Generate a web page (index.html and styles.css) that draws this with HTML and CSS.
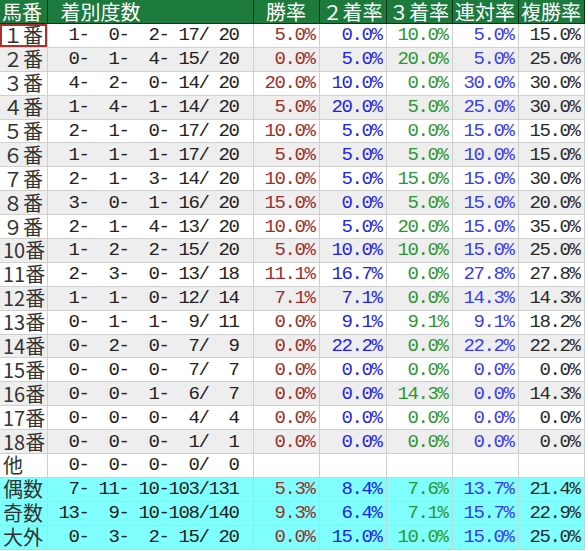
FILE: index.html
```html
<!DOCTYPE html>
<html lang="ja">
<head>
<meta charset="utf-8">
<link rel="stylesheet" href="styles.css">
</head>
<body>
<table class="stats">
<colgroup>
<col class="c-no"><col class="c-cnt"><col class="c-r"><col class="c-r2"><col class="c-r"><col class="c-r"><col class="c-r">
</colgroup>
<thead>
<tr><th class="h-no">馬番</th><th class="h-cnt">着別度数</th><th class="h-r">勝率</th><th class="h-r">２着率</th><th class="h-r">３着率</th><th class="h-r">連対率</th><th class="h-r">複勝率</th></tr>
</thead>
<tbody>
<tr><td class="no sel">１番</td><td class="cnt">  1-  0-  2- 17/ 20</td><td class="win">5.0%</td><td class="p2">0.0%</td><td class="p3">10.0%</td><td class="ren">5.0%</td><td class="fuku">15.0%</td></tr>
<tr><td class="no">２番</td><td class="cnt">  0-  1-  4- 15/ 20</td><td class="win">0.0%</td><td class="p2">5.0%</td><td class="p3">20.0%</td><td class="ren">5.0%</td><td class="fuku">25.0%</td></tr>
<tr><td class="no">３番</td><td class="cnt">  4-  2-  0- 14/ 20</td><td class="win">20.0%</td><td class="p2">10.0%</td><td class="p3">0.0%</td><td class="ren">30.0%</td><td class="fuku">30.0%</td></tr>
<tr><td class="no">４番</td><td class="cnt">  1-  4-  1- 14/ 20</td><td class="win">5.0%</td><td class="p2">20.0%</td><td class="p3">5.0%</td><td class="ren">25.0%</td><td class="fuku">30.0%</td></tr>
<tr><td class="no">５番</td><td class="cnt">  2-  1-  0- 17/ 20</td><td class="win">10.0%</td><td class="p2">5.0%</td><td class="p3">0.0%</td><td class="ren">15.0%</td><td class="fuku">15.0%</td></tr>
<tr><td class="no">６番</td><td class="cnt">  1-  1-  1- 17/ 20</td><td class="win">5.0%</td><td class="p2">5.0%</td><td class="p3">5.0%</td><td class="ren">10.0%</td><td class="fuku">15.0%</td></tr>
<tr><td class="no">７番</td><td class="cnt">  2-  1-  3- 14/ 20</td><td class="win">10.0%</td><td class="p2">5.0%</td><td class="p3">15.0%</td><td class="ren">15.0%</td><td class="fuku">30.0%</td></tr>
<tr><td class="no">８番</td><td class="cnt">  3-  0-  1- 16/ 20</td><td class="win">15.0%</td><td class="p2">0.0%</td><td class="p3">5.0%</td><td class="ren">15.0%</td><td class="fuku">20.0%</td></tr>
<tr><td class="no">９番</td><td class="cnt">  2-  1-  4- 13/ 20</td><td class="win">10.0%</td><td class="p2">5.0%</td><td class="p3">20.0%</td><td class="ren">15.0%</td><td class="fuku">35.0%</td></tr>
<tr><td class="no">10番</td><td class="cnt">  1-  2-  2- 15/ 20</td><td class="win">5.0%</td><td class="p2">10.0%</td><td class="p3">10.0%</td><td class="ren">15.0%</td><td class="fuku">25.0%</td></tr>
<tr><td class="no">11番</td><td class="cnt">  2-  3-  0- 13/ 18</td><td class="win">11.1%</td><td class="p2">16.7%</td><td class="p3">0.0%</td><td class="ren">27.8%</td><td class="fuku">27.8%</td></tr>
<tr><td class="no">12番</td><td class="cnt">  1-  1-  0- 12/ 14</td><td class="win">7.1%</td><td class="p2">7.1%</td><td class="p3">0.0%</td><td class="ren">14.3%</td><td class="fuku">14.3%</td></tr>
<tr><td class="no">13番</td><td class="cnt">  0-  1-  1-  9/ 11</td><td class="win">0.0%</td><td class="p2">9.1%</td><td class="p3">9.1%</td><td class="ren">9.1%</td><td class="fuku">18.2%</td></tr>
<tr><td class="no">14番</td><td class="cnt">  0-  2-  0-  7/  9</td><td class="win">0.0%</td><td class="p2">22.2%</td><td class="p3">0.0%</td><td class="ren">22.2%</td><td class="fuku">22.2%</td></tr>
<tr><td class="no">15番</td><td class="cnt">  0-  0-  0-  7/  7</td><td class="win">0.0%</td><td class="p2">0.0%</td><td class="p3">0.0%</td><td class="ren">0.0%</td><td class="fuku">0.0%</td></tr>
<tr><td class="no">16番</td><td class="cnt">  0-  0-  1-  6/  7</td><td class="win">0.0%</td><td class="p2">0.0%</td><td class="p3">14.3%</td><td class="ren">0.0%</td><td class="fuku">14.3%</td></tr>
<tr><td class="no">17番</td><td class="cnt">  0-  0-  0-  4/  4</td><td class="win">0.0%</td><td class="p2">0.0%</td><td class="p3">0.0%</td><td class="ren">0.0%</td><td class="fuku">0.0%</td></tr>
<tr><td class="no">18番</td><td class="cnt">  0-  0-  0-  1/  1</td><td class="win">0.0%</td><td class="p2">0.0%</td><td class="p3">0.0%</td><td class="ren">0.0%</td><td class="fuku">0.0%</td></tr>
<tr><td class="no">他</td><td class="cnt">  0-  0-  0-  0/  0</td><td class="win"></td><td class="p2"></td><td class="p3"></td><td class="ren"></td><td class="fuku"></td></tr>
<tr class="sum"><td class="no">偶数</td><td class="cnt">  7- 11- 10-103/131</td><td class="win">5.3%</td><td class="p2">8.4%</td><td class="p3">7.6%</td><td class="ren">13.7%</td><td class="fuku">21.4%</td></tr>
<tr class="sum"><td class="no">奇数</td><td class="cnt"> 13-  9- 10-108/140</td><td class="win">9.3%</td><td class="p2">6.4%</td><td class="p3">7.1%</td><td class="ren">15.7%</td><td class="fuku">22.9%</td></tr>
<tr class="sum"><td class="no">大外</td><td class="cnt">  0-  3-  2- 15/ 20</td><td class="win">0.0%</td><td class="p2">15.0%</td><td class="p3">10.0%</td><td class="ren">15.0%</td><td class="fuku">25.0%</td></tr>
</tbody>
</table>
</body>
</html>
```

FILE: styles.css
```css
html, body {
  margin: 0;
  padding: 0;
  background: #ffffff;
}

.stats {
  border-collapse: collapse;
  table-layout: fixed;
  width: 583px;
  font-family: "Liberation Mono", "Noto Sans CJK JP", monospace;
  font-size: 19px;
  color: #222222;
}

.c-no { width: 47px; }
.c-cnt { width: 206px; }
.c-r { width: 66px; }
.c-r2 { width: 67px; }

.stats th {
  background: #1b7a3c;
  color: #ffffff;
  font-weight: normal;
  font-family: "Noto Sans CJK JP", sans-serif;
  font-size: 20px;
  height: 23px;
  padding: 0;
  line-height: 23px;
  border: 1px solid #0f2f18;
  border-top: none;
  white-space: nowrap;
}

.stats th.h-no {
  text-align: left;
  padding-left: 2px;
  border-left: none;
}

.stats th.h-cnt {
  text-align: left;
  padding-left: 13px;
}

.stats th.h-r {
  text-align: center;
}

.stats td {
  height: 22.9px;
  padding: 0;
  line-height: 22px;
  border: 1px solid #cfcfcf;
  white-space: pre;
  text-align: right;
  padding-right: 4px;
  letter-spacing: -1.4px;
}

.stats tbody tr:nth-child(even) td {
  background: #eeeeee;
}

.stats tbody tr.sum td {
  background: #80ffff;
  border-color: #bcd8d8;
}

.stats td.no {
  text-align: left;
  padding: 0 0 0 3px;
  font-family: "Noto Sans CJK JP", sans-serif;
  font-size: 20px;
  letter-spacing: 0;
  border-left: none;
  color: #333333;
}

.stats td.sel {
  box-shadow: inset 0 0 0 2px #a83232;
}

.stats td.cnt {
  padding-right: 14px;
  color: #222222;
}

.stats td.win { color: #9c2f2f; }
.stats td.p2 { color: #1f1fe8; }
.stats td.p3 { color: #2e962e; }
.stats td.ren { color: #3b3bf2; }
.stats td.fuku { color: #2a2a2a; }
```
